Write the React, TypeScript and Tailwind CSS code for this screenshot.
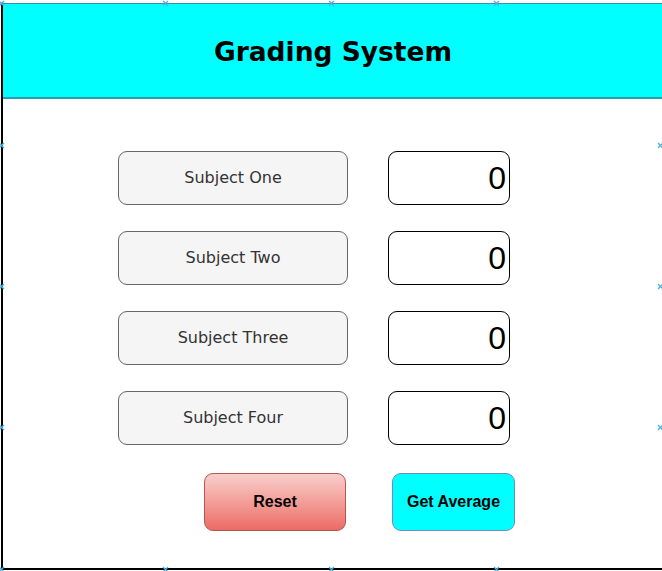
import React from "react";

const subjects = ["Subject One", "Subject Two", "Subject Three", "Subject Four"];

// draw.io connection points on the frame edges
const markers = [
  [-2, 0], [162, 0], [328, 0], [493, 0],
  [-2, 142], [-2, 283], [-2, 424],
  [657, 142], [657, 283], [657, 424],
  [-2, 566], [162, 566], [328, 566], [493, 566],
];

export default function App() {
  return (
    <div className="relative w-[662px] h-[571px] bg-white overflow-hidden">
      <div className="ml-[1px] mt-[3px] w-[680px] h-[567px] border-l-2 border-b-2 border-black flex flex-col">
        <div className="h-[96px] pt-[3px] bg-[#00ffff] border-t border-b-2 border-t-[#3a8fb0] border-b-[#2a9db0] flex items-center">
          <h1 className="w-[660px] text-center text-[26.5px] font-bold text-black font-['Verdana','DejaVu_Sans',sans-serif] leading-none">
            Grading System
          </h1>
        </div>

        <div className="flex flex-col gap-[26px] pt-[52px] pl-[115px]">
          {subjects.map((s) => (
            <div key={s} className="flex items-center gap-[40px]">
              <div className="w-[230px] h-[54px] rounded-[9px] border border-[#666] bg-[#f5f5f5] flex items-center justify-center text-[16px] text-[#333] font-['Verdana','DejaVu_Sans',sans-serif]">
                {s}
              </div>
              <div className="w-[122px] h-[54px] rounded-[9px] border border-black bg-white flex items-center justify-end pr-[3px] text-[32px] text-black font-['Liberation_Sans',Arial,sans-serif]">
                0
              </div>
            </div>
          ))}

          <div className="flex items-center gap-[46px] pl-[86px] mt-[2px]">
            <button className="w-[142px] h-[58px] rounded-[9px] border border-[#b85450] bg-gradient-to-b from-[#f8cecc] to-[#ea6b66] text-[16px] font-bold text-black font-['Liberation_Sans',Arial,sans-serif]">
              Reset
            </button>
            <button className="w-[123px] h-[58px] rounded-[9px] border border-[#6c8ebf] bg-[#00ffff] text-[16px] font-bold text-black font-['Liberation_Sans',Arial,sans-serif]">
              Get Average
            </button>
          </div>
        </div>
      </div>

      {markers.map(([x, y], i) => (
        <svg
          key={i}
          className="absolute w-[7px] h-[7px]"
          style={{ left: x, top: y }}
          viewBox="0 0 7 7"
        >
          <path d="M1 1L6 6M6 1L1 6" stroke="#4ab3e0" strokeWidth="1.3" />
        </svg>
      ))}
    </div>
  );
}
